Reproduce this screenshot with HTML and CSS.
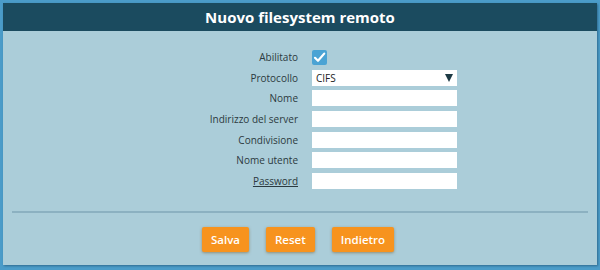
FILE: index.html
```html
<!DOCTYPE html>
<html lang="it">
<head>
  <meta charset="UTF-8">
  <title>Nuovo filesystem remoto</title>
  <link rel="stylesheet" href="styles.css">
</head>
<body>
  <div class="panel">
    <div class="panel-header">Nuovo filesystem remoto</div>
    <div class="panel-body">
      <div class="form-grid">
        <label class="lbl">Abilitato</label>
        <div class="field">
          <span class="check">
            <svg width="15" height="15" viewBox="0 0 15 15"><path d="M3 7.8 L6 10.8 L12.2 3.6" fill="none" stroke="#fff" stroke-width="2.2" stroke-linecap="round" stroke-linejoin="round"/></svg>
          </span>
        </div>
        <label class="lbl">Protocollo</label>
        <div class="field"><div class="select"><span>CIFS</span><span class="arrow"></span></div></div>
        <label class="lbl">Nome</label>
        <div class="field"><div class="input"></div></div>
        <label class="lbl">Indirizzo del server</label>
        <div class="field"><div class="input"></div></div>
        <label class="lbl">Condivisione</label>
        <div class="field"><div class="input"></div></div>
        <label class="lbl">Nome utente</label>
        <div class="field"><div class="input"></div></div>
        <label class="lbl underline">Password</label>
        <div class="field"><div class="input"></div></div>
      </div>
      <div class="separator"></div>
      <div class="buttons">
        <button>Salva</button>
        <button>Reset</button>
        <button>Indietro</button>
      </div>
    </div>
  </div>
</body>
</html>
```

FILE: styles.css
```css
body {
  margin: 0;
  padding: 3px;
  background: #4b9cc9;
  font-family: 'Open Sans', sans-serif;
}

.panel {
  width: 594px;
  height: 262px;
  background: #abcdd9;
  box-shadow: 1px 1px 2px rgba(20, 60, 90, 0.5);
  display: flex;
  flex-direction: column;
}

.panel-header {
  height: 28px;
  line-height: 28px;
  background: #1b4b5f;
  color: #fff;
  font-weight: bold;
  font-size: 15px;
  text-align: center;
}

.panel-body {
  flex: 1;
  display: flex;
  flex-direction: column;
}

.form-grid {
  display: grid;
  grid-template-columns: 295px 145px;
  column-gap: 14px;
  row-gap: 4.7px;
  padding-top: 18px;
  align-items: center;
}

.lbl {
  text-align: right;
  font-size: 10px;
  color: #2b3a40;
  height: 16px;
  line-height: 16px;
}

.underline {
  text-decoration: underline;
}

.field {
  height: 16px;
  display: flex;
  align-items: center;
}

.check {
  width: 15px;
  height: 15px;
  background: #4aa3d4;
  border-radius: 2px;
  display: block;
}

.check svg {
  display: block;
}

.input,
.select {
  width: 145px;
  height: 16px;
  background: #fff;
  box-sizing: border-box;
}

.select {
  display: flex;
  align-items: center;
  justify-content: space-between;
  padding: 0 4px 0 4px;
  font-size: 10px;
  color: #222;
}

.arrow {
  width: 0;
  height: 0;
  border-left: 4.5px solid transparent;
  border-right: 4.5px solid transparent;
  border-top: 8px solid #1d3a44;
}

.separator {
  margin: 22px 9px 0 9px;
  height: 2px;
  background: #8cb1c1;
}

.buttons {
  display: flex;
  justify-content: center;
  gap: 17px;
  margin-top: 14px;
  padding-right: 4px;
}

button {
  height: 25px;
  padding: 0 9px;
  border: none;
  border-radius: 2px;
  background: #f7931e;
  color: #fff;
  font-family: 'Open Sans', sans-serif;
  font-size: 11.5px;
  font-weight: 600;
  box-shadow: 0 1px 3px rgba(120, 80, 20, 0.5);
}
```
